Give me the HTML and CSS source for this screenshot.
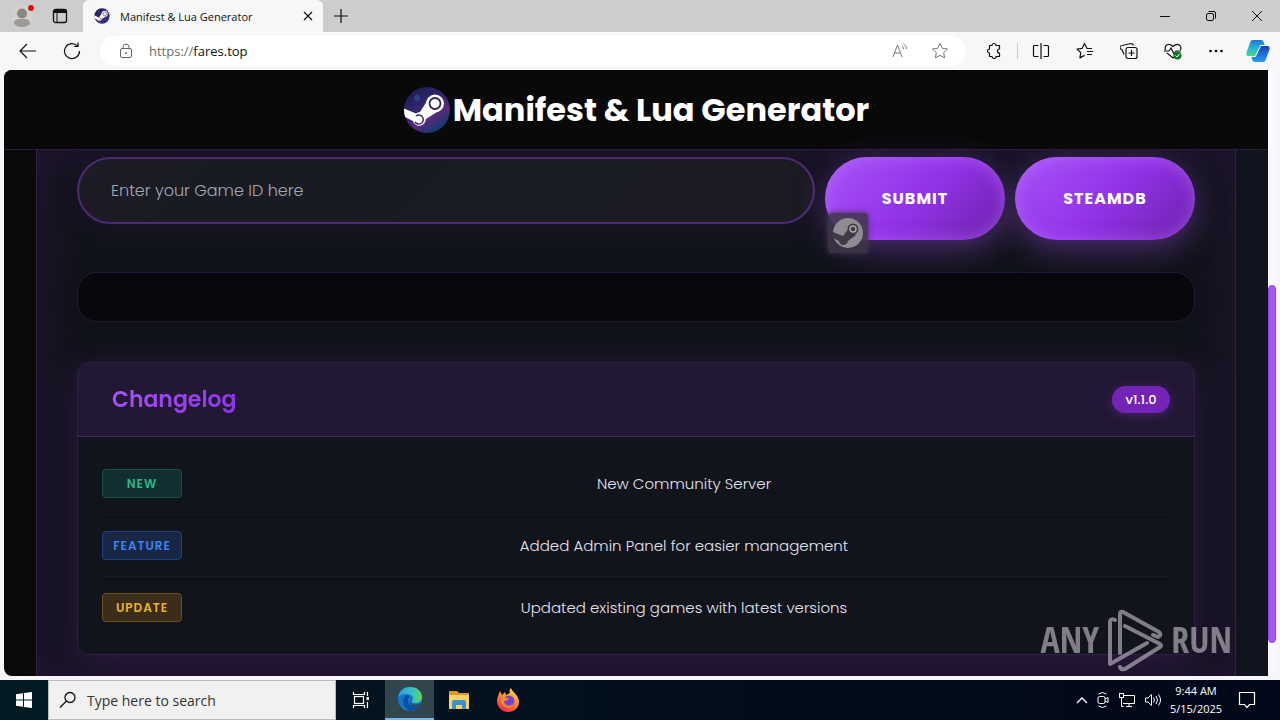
FILE: index.html
```html
<!DOCTYPE html>
<html lang="en">
<head>
<meta charset="utf-8">
<title>Manifest &amp; Lua Generator</title>
<link rel="stylesheet" href="styles.css">
</head>
<body>
<svg class="defs" aria-hidden="true">
  <defs>
    <linearGradient id="space" x1="0" y1="0" x2=".6" y2="1"><stop offset="0" stop-color="#141b45"/><stop offset=".4" stop-color="#2c256c"/><stop offset=".75" stop-color="#552a7a"/><stop offset="1" stop-color="#143a70"/></linearGradient>
    <clipPath id="disc"><circle cx="24" cy="24" r="23"/></clipPath>
    <symbol id="steam" viewBox="0 0 48 48">
      <circle cx="24" cy="24" r="23" fill="url(#space)"/>
      <circle cx="14" cy="12" r="3" fill="#35579c" opacity=".6"/>
      <g clip-path="url(#disc)" fill="#fff">
        <path d="M0 22 13 27.500Q15 26 17 26L24 15 34 26 23 33Q22 39 16 40 11 39 10 35L0 30Z"/>
        <circle cx="32" cy="17.500" r="9"/>
        <circle cx="32" cy="17.500" r="5.500" fill="none" stroke="#29235f" stroke-width="1.800"/>
        <path d="M13 30a4.500 4.500 0 1 1 -1 6" fill="none" stroke="#3a2a72" stroke-width="1.500"/>
      </g>
    </symbol>
  </defs>
</svg>

<div class="tabs">
  <button class="ico profile" aria-label="Profile"><svg width="24" height="26" viewBox="0 0 24 26"><circle cx="12" cy="13" r="11" fill="#d3d0ce"/><circle cx="12" cy="10.500" r="5" fill="#8b8784"/><path d="M4 21c0-5 3-5 8-5s8 0 8 5c-4 4-12 4-16 0Z" fill="#9d9996"/><circle cx="21" cy="5" r="3" fill="#e30b12"/></svg></button>
  <button class="ico workspaces" aria-label="Tab actions"><svg width="16" height="16" viewBox="0 0 16 16"><rect x="1.500" y="1.500" width="13" height="13" rx="2" fill="none" stroke="#111" stroke-width="1.300"/><path d="M1.500 2h13v3h-13z" fill="#111"/><path d="M5 5v9" stroke="#111"/></svg></button>
  <div class="tab"><svg width="16" height="16"><use href="#steam"/></svg><span>Manifest &amp; Lua Generator</span><button class="ico" aria-label="Close tab"><svg width="10" height="10" viewBox="0 0 10 10"><path d="m1 1 8 8M9 1 1 9" stroke="#111" stroke-width="1.200"/></svg></button></div>
  <button class="ico newtab" aria-label="New tab"><svg width="14" height="14" viewBox="0 0 14 14"><path d="M7 0v14M0 7h14" stroke="#111" stroke-width="1.200"/></svg></button>
  <div class="window">
    <button class="ico" aria-label="Minimize"><svg width="10" height="10" viewBox="0 0 10 10"><path d="M0 5.500h10" stroke="#111"/></svg></button>
    <button class="ico" aria-label="Restore"><svg width="10" height="10" viewBox="0 0 10 10"><rect x=".5" y="2.500" width="7" height="7" rx="1.500" fill="none" stroke="#111"/><path d="M2.500.5H8a1.500 1.500 0 0 1 1.500 1.500v5.500" fill="none" stroke="#111"/></svg></button>
    <button class="ico" aria-label="Close"><svg width="10" height="10" viewBox="0 0 10 10"><path d="m0 0 10 10M10 0 0 10" stroke="#111"/></svg></button>
  </div>
</div>

<div class="toolbar">
  <button class="ico" aria-label="Back"><svg width="18" height="16" viewBox="0 0 18 16"><path d="M8 1 1 8l7 7M1 8h16" fill="none" stroke="#111" stroke-width="1.200"/></svg></button>
  <button class="ico" aria-label="Refresh"><svg width="18" height="18" viewBox="0 0 18 18"><path d="M14.500 4A7.500 7.500 0 1 0 16.500 9M15 .5v4h-4" fill="none" stroke="#111" stroke-width="1.200"/></svg></button>
  <div class="address">
    <svg width="14" height="16" viewBox="0 0 14 16" fill="none" stroke="#666"><rect x="1.500" y="5.500" width="11" height="9" rx="1.500"/><path d="M4 5.500V4a3 3 0 0 1 6 0v1.500"/><circle cx="7" cy="10" r=".6" fill="#555"/></svg>
    <span class="url"><i>https://</i>fares.top</span>
    <button class="ico" aria-label="Read aloud"><svg width="18" height="16" viewBox="0 0 18 16" fill="none" stroke="#777"><path d="m2 14 4.500-12L11 14M3.500 10h6M11 3q1.500 1 1.500 3M12.500 1q3 1.500 3 5"/></svg></button>
    <button class="ico" aria-label="Add to favorites"><svg width="18" height="18" viewBox="0 0 18 18"><path d="m9 1.500 2.300 4.800 5.200.7-3.800 3.600.9 5.300L9 13.400l-4.600 2.500.9-5.300L1.500 7l5.200-.7z" fill="none" stroke="#777" stroke-linejoin="round"/></svg></button>
  </div>
  <div class="tools">
    <button class="ico" aria-label="Extensions"><svg width="18" height="18" viewBox="0 0 18 18"><path d="M4.500 3.500H7a2 2 0 0 1 4 0h3.500V7a2 2 0 1 0 0 4v3.500H11a2 2 0 0 1-4 0H4.500V11a2 2 0 1 1 0-4z" fill="none" stroke="#111" stroke-width="1.200" stroke-linejoin="round"/></svg></button>
    <span class="rule"></span>
    <button class="ico" aria-label="Split screen"><svg width="18" height="18" viewBox="0 0 18 18" fill="none" stroke="#111" stroke-width="1.200"><path d="M9 1v16M6.500 3.500h-4a1 1 0 0 0-1 1v9a1 1 0 0 0 1 1h4M11.500 3.500h4a1 1 0 0 1 1 1v9a1 1 0 0 1-1 1h-4"/></svg></button>
    <button class="ico" aria-label="Favorites"><svg width="18" height="18" viewBox="0 0 18 18" fill="none" stroke="#111" stroke-width="1.200" stroke-linejoin="round"><path d="M16 6.500h-5L8.500 1.500 6.200 6.300 1 7l3.800 3.600-.9 5.300 4.600-2.500M11 9.500h6M11 12.500h5"/></svg></button>
    <button class="ico" aria-label="Collections"><svg width="18" height="18" viewBox="0 0 18 18" fill="none" stroke="#111" stroke-width="1.200"><rect x="6" y="5.500" width="11" height="11" rx="2"/><path d="M11.500 8v6M8.500 11h6M4 12.500 2 7.500a2 2 0 0 1 0-4l9-2q2 0 2.500 2"/></svg></button>
    <button class="ico" aria-label="Browser essentials"><svg width="18" height="18" viewBox="0 0 18 18"><path d="M1.500 8C0 4 4 0 9 4.500c5-4.500 9-.5 7.500 3.500M3 11l6 5 2-2M0 9h5l2-3 3 6 2-3h5" fill="none" stroke="#111" stroke-width="1.200"/><circle cx="13.500" cy="13.500" r="4" fill="#187c25"/><path d="m11.500 13.500 1.500 1.500 2.500-3" fill="none" stroke="#fff"/></svg></button>
    <button class="ico" aria-label="Settings and more"><svg width="16" height="4" viewBox="0 0 16 4"><circle cx="2.500" cy="2" r="1.300"/><circle cx="8" cy="2" r="1.300"/><circle cx="13.500" cy="2" r="1.300"/></svg></button>
    <button class="ico" aria-label="Copilot"><svg width="24" height="24" viewBox="0 0 24 24"><defs><linearGradient id="ca" x2="0" y2="1"><stop stop-color="#1c76d8"/><stop offset=".5" stop-color="#23b5d6"/><stop offset="1" stop-color="#52d38b"/></linearGradient><linearGradient id="cb" x2="0" y2="1"><stop stop-color="#1b3fc0"/><stop offset="1" stop-color="#259df5"/></linearGradient></defs><path d="M7 1h8c2 0 3 2 3.500 5h-4L9 17H3c-3 0-3-2-2-5L4 4c.5-2 1-3 3-3Z" fill="url(#ca)"/><path d="M17 23H9c-2 0-3-2-3.500-5h4L15 7h6c3 0 3 2 2 5l-3 8c-.5 2-1 3-3 3Z" fill="url(#cb)"/></svg></button>
  </div>
</div>

<div class="viewport">
  <div class="site">
    <header class="site-head"><svg width="48" height="48"><use href="#steam"/></svg><h1>Manifest &amp; Lua Generator</h1></header>
    <main class="panel">
      <form class="search">
        <input class="game" type="text" aria-label="Game ID" placeholder="Enter your Game ID here">
        <div class="btn-wrap">
          <button class="btn" type="button">Submit</button>
          <span class="chip"><svg width="32" height="32" viewBox="0 0 32 32"><circle cx="16" cy="16" r="15" fill="#8f8b92"/><path d="m1 15 10 4 6-8 7 7-8 6q-1 4-5 4-4-1-4-4l-6-3Z" fill="#403a46"/><circle cx="21" cy="12" r="5.500" fill="#403a46"/><circle cx="21" cy="12" r="3" fill="#403a46" stroke="#aaa6ad" stroke-width="1.500"/></svg></span>
        </div>
        <button class="btn" type="button">SteamDB</button>
      </form>
      <div class="status"></div>
      <section class="log">
        <div class="log-head"><h2>Changelog</h2><span class="version">v1.1.0</span></div>
        <ul>
          <li><span class="tag new">New</span><p>New Community Server</p></li>
          <li><span class="tag feature">Feature</span><p>Added Admin Panel for easier management</p></li>
          <li><span class="tag update">Update</span><p>Updated existing games with latest versions</p></li>
        </ul>
      </section>
    </main>
  </div>
  <div class="track"><div class="thumb"></div></div>
</div>

<div class="taskbar">
  <button class="task start" aria-label="Start"><svg width="16" height="16" viewBox="0 0 16 16" fill="#fff"><path d="m0 2.300 7-1v6.200H0zM8 1.100 16 0v7.500H8zM0 8.500h7v6.200l-7-1zM8 8.500h8V16l-8-1.100z"/></svg></button>
  <label class="find"><svg width="18" height="18" viewBox="0 0 18 18" fill="none" stroke="#111" stroke-width="1.300"><circle cx="11" cy="6.500" r="5"/><path d="M7.500 10 1 16.500"/></svg><input type="text" aria-label="Search" placeholder="Type here to search"></label>
  <button class="task" aria-label="Task view"><svg width="18" height="18" viewBox="0 0 18 18" fill="none" stroke="#fff" stroke-width="1.200"><rect x="2.500" y="5.500" width="9" height="7"/><path d="M1.500 1v2.500h11V1M1.500 17v-2.500h11V17M15.500 1v4M15.500 11v6"/><path d="M14.500 6h2.500v3h-2.500z" fill="#fff" stroke="none"/></svg></button>
  <button class="task active" aria-label="Edge"><svg width="26" height="26" viewBox="0 0 26 26"><defs><linearGradient id="ea" x2="1"><stop stop-color="#2a9fe5"/><stop offset=".6" stop-color="#35c2c5"/><stop offset="1" stop-color="#63d54d"/></linearGradient></defs><circle cx="13" cy="13" r="12" fill="#1476cc"/><path d="M1 12C2 4 8 1 13 1c8 0 12 5 12 10 0 4-3 6-7 6-2 0-4-1-3-2 3-4-1-7-5-7-5 0-8 1-9 4Z" fill="url(#ea)"/><path d="M10 9c-6 3-5 13 3 16 4 0 7-2 9-5-7 2-12-2-11-6 0-2 1-3 2-3z" fill="#0d4fa0"/><path d="M14 15c-1 3 5 5 10 2l1 1-4 3c-5 0-9-3-7-6Z" fill="#34464d"/></svg></button>
  <button class="task" aria-label="File Explorer"><svg width="22" height="20" viewBox="0 0 22 20"><path d="M1 1h8l2 2h10v15H1z" fill="#d99a25"/><path d="M1 5h20v14H1z" fill="#fbd25f"/><path d="M4 19v-7q0-2 2-2h10q2 0 2 2v7h-4v-4H8v4z" fill="#3794cf"/></svg></button>
  <button class="task" aria-label="Firefox"><svg width="24" height="26" viewBox="0 0 24 26"><defs><linearGradient id="fa" x1=".8" y1="0" x2=".3" y2="1"><stop stop-color="#ffe24a"/><stop offset=".5" stop-color="#ff8a25"/><stop offset="1" stop-color="#ee2558"/></linearGradient></defs><path d="M15 1c1 4 8 7 8 14 0 6-5 10-11 10S1 20 1 14c0-4 2-7 3-10l2 4 3-3 1 3 4-2c-1-2 0-4 1-5Z" fill="url(#fa)"/><circle cx="13" cy="14" r="5.500" fill="#7546d6"/><path d="M5 12c3-3 6-1 8 0-2 1-3 2-5 2 0 5 6 6 9 3-2 6-12 5-12-5Z" fill="#ff8d25"/></svg></button>
  <div class="tray">
    <button class="ico" aria-label="Show hidden icons"><svg width="12" height="8" viewBox="0 0 12 8"><path d="m1 7 5-5 5 5" fill="none" stroke="#fff" stroke-width="1.300"/></svg></button>
    <button class="ico" aria-label="Meet now"><svg width="14" height="18" viewBox="0 0 14 18" fill="none" stroke="#fff"><rect x="2" y="5.500" width="7" height="7" rx="1.500"/><path d="m9 8 3-1.500v5L9 10M2.500 3q4-3 8 0M2.500 15q4 3 8 0"/></svg></button>
    <button class="ico" aria-label="Network"><svg width="18" height="16" viewBox="0 0 18 16" fill="none" stroke="#fff"><path d="M5 3.500h11.500v8H5M8 14.500h6M11 11.500v3M3.500 6v8.500h2"/><rect x="1.500" y="1.500" width="4" height="4"/></svg></button>
    <button class="ico" aria-label="Volume"><svg width="18" height="16" viewBox="0 0 18 16" fill="none" stroke="#fff"><path d="M1.500 6v4H4l3.500 3.500v-11L4 6zM9.500 5.500q2 2.500 0 5M12 4q3 4 0 8M14.500 2.500q4 5.500 0 11"/></svg></button>
    <div class="clock"><span>9:44 AM</span><span>5/15/2025</span></div>
    <button class="ico" aria-label="Notifications"><svg width="18" height="18" viewBox="0 0 18 18"><path d="M1.500 1.500h15v12h-5l-2.500 3-2.500-3h-5z" fill="none" stroke="#fff" stroke-width="1.200"/></svg></button>
  </div>
</div>

<div class="watermark"><span>ANY</span><svg width="56" height="64" viewBox="0 0 56 64" fill="none" stroke="#a7a0ad" stroke-width="4" stroke-linejoin="round" stroke-linecap="round"><path d="M13 45V6q0-3 3-2l36 20q3 3-1 5l-5-2"/><path d="m18 18 35 18q2 2 0 3L18 61q-4 1-5-2"/><path d="M8 12q-5-2-5 2v42l37-21"/></svg><span>RUN</span></div>
</body>
</html>
```
FILE: styles.css
```css
* { box-sizing: border-box; }
body {
  margin: 0; height: 100vh; display: flex; flex-direction: column; position: relative;
  overflow: hidden; background: #f7f7f7; color: #111;
  font-family: "Open Sans", "Noto Sans", sans-serif; font-size: 12px;
}
button, input { font: inherit; color: inherit; border: 0; margin: 0; padding: 0; background: none; }
h1, h2, p, ul { margin: 0; padding: 0; }
svg { display: block; flex: none; }
.defs { position: absolute; width: 0; height: 0; }
.ico { display: grid; place-items: center; flex: none; }

.tabs { display: flex; align-items: center; height: 32px; flex: none; background: #cdcdcd; }
.profile { margin-left: 10px; }
.workspaces { margin: 0 15px 0 18px; }
.tab {
  display: flex; align-items: center; align-self: stretch; width: 240px; padding: 0 10px 0 11px;
  background: #f7f7f7; border-radius: 6px 6px 0 0;
}
.tab span { flex: 1; margin-left: 10px; white-space: nowrap; font-size: 11px; }
.newtab { margin-left: 11px; }
.window { display: flex; gap: 36px; margin-left: auto; padding-right: 18px; }

.toolbar { display: flex; align-items: center; height: 38px; flex: none; padding: 0 10px 0 19px; }
.toolbar > .ico + .ico { margin: 0 19px 0 26px; }
.address {
  flex: 1; display: flex; align-items: center; height: 30px; padding: 0 17px 0 19px;
  background: #fff; border-radius: 15px;
}
.url { flex: 1; margin-left: 16px; font-size: 13px; }
.url i { font-style: normal; color: #6c6c6c; }
.address .ico + .ico { margin-left: 22px; }
.tools { display: flex; align-items: center; gap: 26px; margin-left: 19px; }
.tools .rule { width: 1px; height: 16px; background: #ccc; margin: 0 -12px; }
.tools .ico:last-child { margin-left: -4px; }

.viewport { flex: 1; min-height: 0; display: flex; padding: 0 4px 4px; background: #f6f5f8; }
.site {
  flex: 1; min-width: 0; display: flex; flex-direction: column; overflow: hidden;
  border-radius: 8px 0 0 8px; color: #e2e4ec;
  background: linear-gradient(90deg, #090909, #0c0b10 30%, #10131c 96%, #11151f);
  font-family: Poppins, Inter, "Liberation Sans", sans-serif;
}
.track { width: 8px; padding: 215px 0 33px; background: #fbf7ff; }
.thumb { height: 100%; border: 1px solid #8a45d4; border-radius: 4px; background: #a855f7; }
.site-head {
  display: flex; align-items: center; justify-content: center; gap: 2px; height: 80px; flex: none;
  position: relative; background: #090909; border-bottom: 1px solid #2b1d3a;
}
h1 { font-size: 32px; line-height: 48px; font-weight: 700; color: #fff; }

.panel {
  flex: 1; margin: 0 32px; padding: 7px 40px 20px;
  border: solid #35204b; border-width: 0 1px; background: #12141c;
  box-shadow: inset 0 0 50px #241536;
}
.search { display: flex; align-items: flex-start; gap: 10px; }
.game {
  flex: 1; min-width: 0; height: 67px; padding: 0 32px; border: 2px solid #4c2b74; border-radius: 34px;
  background: linear-gradient(135deg, #1e1b24, #181b24 20%, #1b1b22); box-shadow: 0 4px 20px #1c1327;
  font-size: 16px; font-weight: 300;
}
.game::placeholder { color: #a5a8b0; opacity: 1; }
.btn-wrap { position: relative; }
.btn {
  display: block; width: 180px; height: 83px; border-radius: 42px; color: #fff;
  background: linear-gradient(135deg, #a855f7, #9333ea 50%, #6b21a8);
  box-shadow: 0 8px 30px #8a45c880, inset 0 0 16px #c47cff80;
  font-size: 16px; font-weight: 700; text-transform: uppercase; letter-spacing: 1px;
}
.chip {
  position: absolute; left: 3px; top: 56px; display: grid; place-items: center; width: 40px; height: 40px;
  border-radius: 4px; background: #3f3648d9; box-shadow: 0 0 6px #43394c;
}
.status {
  height: 50px; margin-top: 32px; border: 1px solid #231a35; border-radius: 20px;
  background: #08070c; box-shadow: 0 5px 25px #0f0d1480;
}
.log {
  margin-top: 40px; border: 1px solid #311e46; border-radius: 12px; overflow: hidden;
  background: #12141c; box-shadow: 0 8px 32px #2c1742;
}
.log-head {
  display: flex; align-items: center; justify-content: space-between; height: 74px; padding: 0 24px 0 34px;
  background: #231833; border-bottom: 1px solid #432b5e;
}
h2 {
  font-size: 22px; line-height: 32px; font-weight: 600;
  background: linear-gradient(135deg, #a855f7, #8b32ee); background-clip: text; color: transparent;
}
.version {
  width: 58px; border-radius: 14px; background: #7423b7; box-shadow: 0 2px 10px #48206e;
  color: #fff; font-size: 13px; line-height: 27px; font-weight: 500; text-align: center;
}
.log ul { list-style: none; padding: 16px 24px; }
.log li { display: flex; align-items: center; gap: 16px; padding: 16px 0; }
.log li + li { border-top: 1px solid #1c1826; }
.log p { flex: 1; text-align: center; font-size: 15px; line-height: 24px; font-weight: 300; }
.tag {
  width: 80px; border: 1px solid; border-radius: 4px; text-align: center; text-transform: uppercase;
  font-size: 12px; line-height: 27px; font-weight: 600; letter-spacing: 1px;
}
.new { color: #29b98a; background: #112e30; border-color: #155042; }
.feature { color: #3f82ee; background: #192746; border-color: #234176; }
.update { color: #eab324; background: #3b2d19; border-color: #6b501b; }

.taskbar { display: flex; align-items: stretch; height: 40px; flex: none; background: linear-gradient(90deg, #031a22, #020e1c 50%, #020819); color: #fff; }
.task { display: grid; place-items: center; width: 49px; }
.start { width: 48px; }
.find { display: flex; align-items: center; gap: 10px; width: 288px; padding: 0 10px; background: #f1f1f1; border: 1px solid #bbb; color: #222; }
.find input { flex: 1; min-width: 0; font-size: 14px; }
.find input::placeholder { color: #333; opacity: 1; }
.active { background: #34464d; border-bottom: 2px solid #76b9ed; }
.tray { display: flex; align-items: center; gap: 8px; margin-left: auto; padding-right: 24px; }
.clock { display: flex; flex-direction: column; align-items: center; width: 52px; line-height: 18px; font-size: 11px; }
.tray .clock + .ico { margin-left: 8px; }

.watermark {
  position: absolute; right: 48px; bottom: 48px; display: flex; align-items: center; gap: 8px; opacity: .75;
  color: #a7a0ad; font-family: "Liberation Sans Narrow", "Open Sans Condensed", "Roboto Condensed", "Liberation Sans", sans-serif;
  font-size: 36px; line-height: 64px;
}
```
